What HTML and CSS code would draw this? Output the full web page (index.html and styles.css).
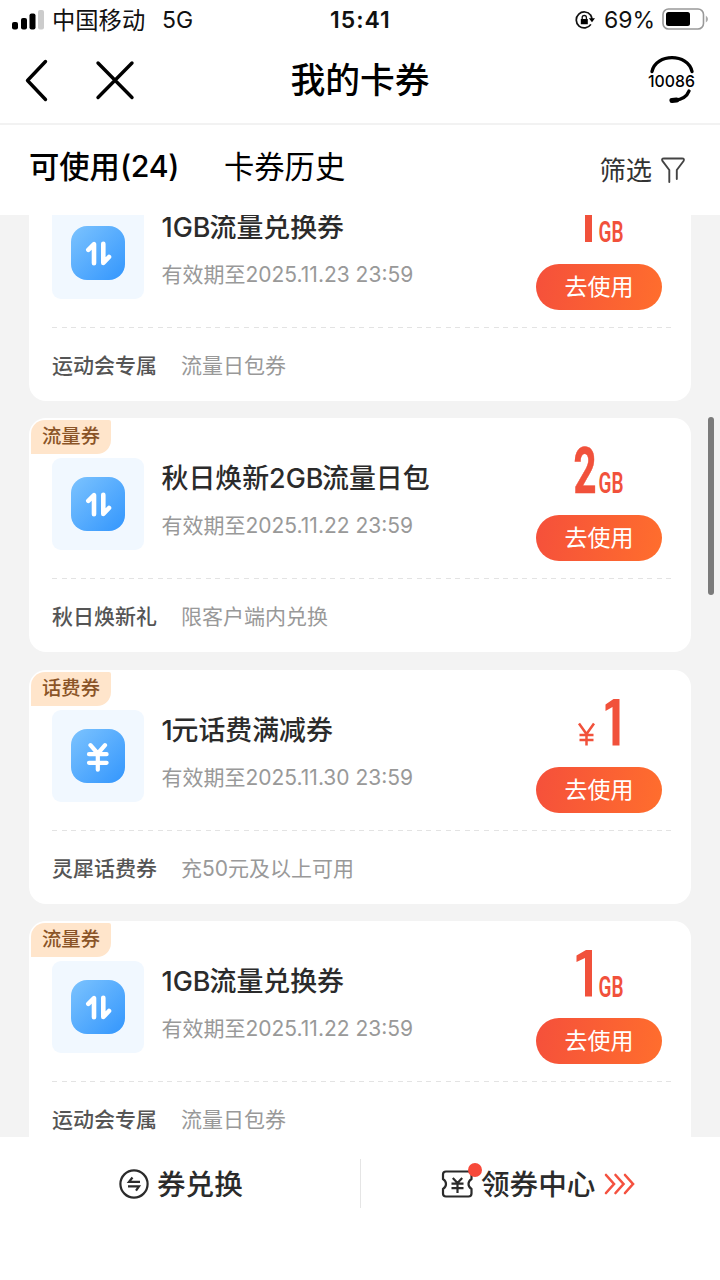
FILE: index.html
```html
<!DOCTYPE html>
<html lang="zh-CN">
<head>
<meta charset="utf-8">
<title>我的卡券</title>
<link rel="stylesheet" href="styles.css">
</head>
<body>
<svg class="defs" width="0" height="0" aria-hidden="true">
  <defs>
    <linearGradient id="blue" x1="0" y1="0" x2="1" y2="1">
      <stop offset="0" stop-color="#7cc3fe"/><stop offset="1" stop-color="#3396fd"/>
    </linearGradient>
    <symbol id="data" viewBox="0 0 54 54">
      <rect width="54" height="54" rx="16" fill="url(#blue)"/>
      <path d="M17.3 23.800 L23 18.2 V37.3 M32.300 17.7 V37 L38 31" fill="none" stroke="#fff" stroke-width="4.6" stroke-linecap="round" stroke-linejoin="round"/>
    </symbol>
    <symbol id="yuan" viewBox="0 0 54 54">
      <rect width="54" height="54" rx="16" fill="url(#blue)"/>
      <path d="M19.5 16.2 L26.8 24.5 L34 16.2 M26.8 24.5 V40.7 M18 25.2 H35.6 M18 33.8 H35.6" fill="none" stroke="#fff" stroke-width="4.2" stroke-linecap="round" stroke-linejoin="round"/>
    </symbol>
  </defs>
</svg>
<div class="screen">
  <div class="status">
    <svg class="signal" width="32" height="20" viewBox="0 0 32 20">
      <rect x="0" y="12" width="6" height="7.500" rx="2"/><rect x="9" y="8" width="6" height="11.500" rx="2"/><rect x="17.5" y="3.5" width="6" height="16" rx="2"/><rect x="26" y="0" width="6" height="19.500" rx="2" fill="#ccc"/>
    </svg>
    <span class="carrier">中国移动</span>
    <span class="net">5G</span>
    <span class="time">15:41</span>
    <svg class="lock" width="20" height="18" viewBox="0 0 20 18">
      <path d="M15.7 4.2 A8 8 0 1 0 15.9 13.4 M15.6 4 A8 8 0 0 1 16.8 8" fill="none" stroke="#111" stroke-width="1.7"/>
      <path d="M13.8 7.3 H20 L17 11.3 Z M5.8 8 h7 v5.2 h-7z"/>
      <path d="M7.2 8.2 V6.6 a2.1 2.1 0 0 1 4.2 0 V8.2" fill="none" stroke="#111" stroke-width="1.3"/>
    </svg>
    <span class="pct">69%</span>
    <svg class="battery" width="46" height="22" viewBox="0 0 46 22">
      <rect x="1" y="1" width="40.5" height="20" rx="5.5" fill="none" stroke="#999" stroke-width="1.6"/><rect x="4" y="4" width="24" height="14" rx="2.5"/><path d="M43.8 7.5 Q46 9 46 11 T43.8 14.5Z" fill="#aaa"/>
    </svg>
  </div>
  <header class="header">
    <svg class="nav" width="112" height="44" viewBox="0 0 112 44">
      <path d="M22.5 3.5 L4.5 22.5 L22.5 41.5 M75 5 L109 39.5 M109 5 L75 39.5" fill="none" stroke="#000" stroke-width="3.4" stroke-linecap="round" stroke-linejoin="round"/>
    </svg>
    <h1>我的卡券</h1>
    <svg class="service" width="50" height="50" viewBox="0 0 50 50">
      <path d="M5 16.500 C9 -2 41 -2 45 16.500 M42 36 Q39 44 28 45.3" fill="none" stroke="#000" stroke-width="3.4" stroke-linecap="round"/>
      <path d="M25 45.5 L29.5 45" stroke="#000" stroke-width="5.2" stroke-linecap="round"/>
      <text x="1" y="32.300" font-size="16.500" textLength="47" lengthAdjust="spacingAndGlyphs">10086</text>
    </svg>
  </header>
  <nav class="tabs">
    <span class="tab active">可使用<span class="count">(24)</span></span>
    <span class="tab">卡券历史</span>
    <span class="filter">筛选</span>
    <svg width="26" height="28" viewBox="0 0 26 28">
      <path d="M9.3 26 V14 L2.6 5.2 Q1 2.5 4 2.5 H22 Q25 2.5 23.4 5.2 L16.8 14 V23" fill="none" stroke="#444" stroke-width="1.9" stroke-linecap="round" stroke-linejoin="round"/>
    </svg>
  </nav>
  <main class="list">
    <article class="card">
      <div class="main">
        <div class="thumb"><svg width="54" height="54"><use href="#data"/></svg></div>
        <div class="info"><h2><b class="n1">1GB</b>流量兑换券</h2><p>有效期至<span class="date">2025.11.23 23:59</span></p></div>
        <div class="side">
          <svg class="price" width="126" height="50" viewBox="0 0 126 50"><path d="M56 47 H49 V11 L41 15.5 V8.5 L50 1 H56Z"/><text x="62.5" y="47" font-size="30" textLength="25" lengthAdjust="spacingAndGlyphs">GB</text></svg>
          <button>去使用</button>
        </div>
      </div>
      <div class="foot"><span class="src">运动会专属</span><span>流量日包券</span></div>
    </article>
    <article class="card">
      <span class="tag">流量券</span>
      <div class="main">
        <div class="thumb"><svg width="54" height="54"><use href="#data"/></svg></div>
        <div class="info"><h2>秋日焕新<b class="n2">2GB</b>流量日包</h2><p>有效期至<span class="date">2025.11.22 23:59</span></p></div>
        <div class="side">
          <svg class="price" width="126" height="50" viewBox="0 0 126 50"><text class="big" x="37.5" y="47" font-size="64" textLength="23" lengthAdjust="spacingAndGlyphs">2</text><text x="62.5" y="47" font-size="30" textLength="25" lengthAdjust="spacingAndGlyphs">GB</text></svg>
          <button>去使用</button>
        </div>
      </div>
      <div class="foot"><span class="src">秋日焕新礼</span><span>限客户端内兑换</span></div>
    </article>
    <article class="card">
      <span class="tag">话费券</span>
      <div class="main">
        <div class="thumb"><svg width="54" height="54"><use href="#yuan"/></svg></div>
        <div class="info"><h2><b class="n3">1</b>元话费满减券</h2><p>有效期至<span class="date">2025.11.30 23:59</span></p></div>
        <div class="side">
          <svg class="price" width="126" height="50" viewBox="0 0 126 50"><path d="M83.500 47.500 H76.500 V9 L69.500 13 V6.500 L77.500 1 H83.500Z"/><path d="M43 25.500 L50.500 36 L58 25.500 M50.500 36 V47.500 M43.500 37 H57.500 M43.500 42 H57.500" fill="none" stroke="#f1513b" stroke-width="2.500"/></svg>
          <button>去使用</button>
        </div>
      </div>
      <div class="foot"><span class="src">灵犀话费券</span><span>充50元及以上可用</span></div>
    </article>
    <article class="card">
      <span class="tag">流量券</span>
      <div class="main">
        <div class="thumb"><svg width="54" height="54"><use href="#data"/></svg></div>
        <div class="info"><h2><b class="n1">1GB</b>流量兑换券</h2><p>有效期至<span class="date">2025.11.22 23:59</span></p></div>
        <div class="side">
          <svg class="price" width="126" height="50" viewBox="0 0 126 50"><path d="M56 47.500 H49 V9 L40.500 13 V6.500 L50 1 H56Z"/><text x="62.5" y="47.500" font-size="30" textLength="25" lengthAdjust="spacingAndGlyphs">GB</text></svg>
          <button>去使用</button>
        </div>
      </div>
      <div class="foot"><span class="src">运动会专属</span><span>流量日包券</span></div>
    </article>
    <i class="scrollbar"></i>
  </main>
  <footer class="bottom">
    <div class="action">
      <svg width="30" height="30" viewBox="0 0 30 30"><circle cx="15" cy="15" r="13.600" fill="none" stroke="#2b2b2b" stroke-width="2.200"/><path d="M21 12.800 H10 L13.500 8.500 M9 17.300 H20 L17 21.600" fill="none" stroke="#2b2b2b" stroke-width="2.200"/></svg>
      <span>券兑换</span>
    </div>
    <div class="action center">
      <svg width="46" height="38" viewBox="0 0 46 38"><path d="M6 8.500 H28.500 Q31.500 8.500 31.500 11.500 V16 Q28.500 18 28.500 21 Q28.500 24 31.500 26 V30.500 Q31.500 33.500 28.500 33.500 H6 Q3 33.500 3 30.500 V26 Q6 24 6 21 Q6 18 3 16 V11.500 Q3 8.500 6 8.500Z M12.800 15 L17.500 20 L22.200 15 M17.500 20 V30 M11.500 20.700 H23.500 M11.500 25.200 H23.500" fill="none" stroke="#2b2b2b" stroke-width="2.200"/><circle cx="35" cy="7" r="7" fill="#f7493a"/></svg>
      <span>领券中心</span>
      <svg class="arrows" width="32" height="22" viewBox="0 0 32 22"><path d="M2 2 L10 11 L2 20 M11.500 2 L19.500 11 L11.500 20 M21 2 L29 11 L21 20" fill="none" stroke="#f4513f" stroke-width="2.600" stroke-linecap="round"/></svg>
    </div>
  </footer>
</div>
</body>
</html>
```
FILE: styles.css
```css
* { box-sizing: border-box; margin: 0; padding: 0; }
body { width: 720px; height: 1280px; overflow: hidden; background: #fff; font-family: Inter, "Noto Sans CJK SC", sans-serif; color: #000; }
svg { display: block; flex: none; overflow: visible; }
.defs { position: absolute; }
.screen { width: 720px; height: 1280px; display: flex; flex-direction: column; overflow: hidden; white-space: nowrap; }

.status { height: 40px; display: flex; align-items: center; padding-left: 12px; line-height: 40px; color: #111; }
.signal { margin-right: 8px; }
.carrier { width: 94px; padding-top: 1px; font-size: 23.3px; }
.net { width: 30px; margin-left: 16px; font-size: 23px; }
.time { width: 61px; margin-left: 138px; font-size: 23px; font-weight: 600; letter-spacing: 1px; }
.lock { margin-left: 184px; }
.pct { width: 50px; margin-left: 9px; font-size: 23px; }
.battery { margin-left: 8px; margin-top: -2px; }

.header { height: 85px; display: grid; grid-template-columns: 265px 190px 265px; align-items: center; padding-bottom: 4px; border-bottom: 2px solid #f2f2f2; }
.nav { margin-left: 23px; }
h1 { padding-top: 1px; font-size: 34.8px; font-weight: 500; line-height: 50px; text-align: center; }
.service { justify-self: end; margin-right: 23px; }
.service text { font-weight: 500; }

.tabs { height: 90px; display: flex; align-items: center; padding: 0 34px 6px 29px; line-height: 50px; font-size: 30.3px; }
.active { width: 195px; font-weight: 500; }
.count { position: relative; top: -1px; letter-spacing: -0.3px; }
.filter { margin-left: auto; margin-right: 8px; padding-top: 7px; font-size: 26.3px; color: #333; }
.tabs svg { margin-top: 5px; }

.list { position: relative; height: 922px; overflow: hidden; display: flex; flex-direction: column; justify-content: flex-end; gap: 17.500px; padding: 0 29px; background: #f3f3f3; }
.card { position: relative; flex: none; height: 234px; border-radius: 17px; background: #fff; padding: 28px 20px 0 23px; }
.card:nth-of-type(4) { margin-bottom: -18.300px; }
.tag { position: absolute; left: 2px; top: 2px; width: 80px; height: 34px; border-radius: 14px 2px 14px 0; background: #ffe5cb; color: #8a5427; font-size: 19.3px; font-weight: 500; line-height: 33px; text-align: center; }
.main { height: 133px; display: flex; border-bottom: 1px solid transparent; background: repeating-linear-gradient(90deg, #e3e3e3 0 5px, transparent 5px 9.600px) bottom / 100% 1px no-repeat border-box; }
.thumb { width: 92px; height: 92px; margin-top: 12px; border-radius: 9px; background: #f1f8ff; display: grid; place-items: center; }
.info { margin-left: 17.500px; padding-top: 12px; }
h2 { font-size: 26.900px; font-weight: 500; line-height: 40px; color: #2b2b2b; }
h2 b { display: inline-block; font-weight: 500; }
.n1 { width: 48px; }
.n2 { width: 53px; }
.n3 { width: 10px; }
p { margin-top: 12px; font-size: 21px; line-height: 32px; color: #999; }
.side { margin-left: auto; margin-right: 9px; }
.price text, .price path { fill: #f1513b; }
.price path[fill="none"] { fill: none; }
.price text { font-family: Roboto, sans-serif; font-weight: 600; }
.price .big { font-weight: 700; stroke: #f1513b; stroke-width: .6px; }
button { display: block; width: 126px; height: 46px; margin-top: 19px; border: 0; border-radius: 23px; background: linear-gradient(100deg, #f5503b, #ff6e2d); color: #fff; font: 400 23px/44px Inter, "Noto Sans CJK SC", sans-serif; }
.foot { display: flex; gap: 24px; padding-top: 22px; font-size: 21px; line-height: 32px; color: #999; }
.src { color: #555; font-weight: 500; }
.scrollbar { position: absolute; right: 6px; top: 202px; width: 6px; height: 178px; border-radius: 3px; background: #7b7b7b; }

.bottom { flex: 1; display: grid; grid-template-columns: 361px 359px; align-content: start; padding-top: 22px; }
.action { height: 49px; display: flex; align-items: center; padding-left: 119px; font-size: 28.600px; line-height: 49px; font-weight: 500; color: #2b2b2b; }
.action:first-child { border-right: 1px solid #e5e5e5; }
.action span { padding-top: 2px; }
.action:first-child span { margin-left: 8px; }
.center { padding-left: 79px; }
.center svg:first-child { margin-top: -4px; }
.center span { margin-left: -5px; }
.arrows { margin-left: 9px; }
```
